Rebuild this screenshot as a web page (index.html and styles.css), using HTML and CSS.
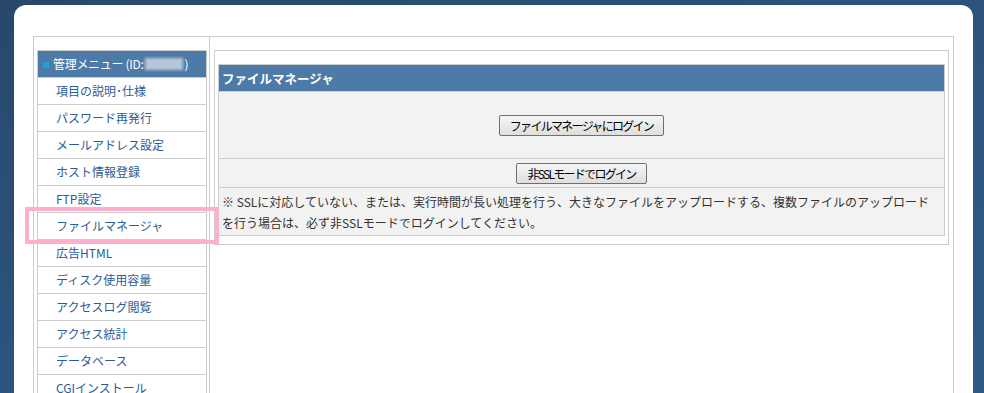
FILE: index.html
```html
<!DOCTYPE html>
<html lang="ja">
<head>
    <meta charset="UTF-8">
    <title>ファイルマネージャ</title>
    <link rel="stylesheet" href="styles.css">
</head>
<body>
    <div class="page">
        <div class="frame">
            <div class="sideCol">
                <ul class="menu">
                    <li class="menuHead"><span class="mark"></span>管理メニュー (ID:<span class="idMask"></span>)</li>
                    <li><a href="#">項目の説明･仕様</a></li>
                    <li><a href="#">パスワード再発行</a></li>
                    <li><a href="#">メールアドレス設定</a></li>
                    <li><a href="#">ホスト情報登録</a></li>
                    <li><a href="#">FTP設定</a></li>
                    <li class="current"><a href="#">ファイルマネージャ</a><span class="highlight"></span></li>
                    <li><a href="#">広告HTML</a></li>
                    <li><a href="#">ディスク使用容量</a></li>
                    <li><a href="#">アクセスログ閲覧</a></li>
                    <li><a href="#">アクセス統計</a></li>
                    <li><a href="#">データベース</a></li>
                    <li><a href="#">CGIインストール</a></li>
                </ul>
            </div>
            <div class="mainCol">
                <div class="box">
                    <table class="fmTable">
                        <tr><th>ファイルマネージャ</th></tr>
                        <tr><td class="loginCell"><button type="button">ファイルマネージャにログイン</button></td></tr>
                        <tr><td class="plainCell"><button type="button">非SSLモードでログイン</button></td></tr>
                        <tr><td class="note">※ SSLに対応していない、または、実行時間が長い処理を行う、大きなファイルをアップロードする、複数ファイルのアップロードを行う場合は、必ず非SSLモードでログインしてください。</td></tr>
                    </table>
                </div>
            </div>
        </div>
    </div>
</body>
</html>
```

FILE: styles.css
```css
body {
    margin: 0;
    height: 393px;
    overflow: hidden;
    background: linear-gradient(160deg, #27486b 0%, #2e5580 55%, #2f5a86 100%);
    font-family: "Noto Sans CJK JP", "Noto Sans", sans-serif;
    font-size: 12px;
    color: #333;
}

.page {
    margin: 5px 0 0 14px;
    width: 921px;
    height: 400px;
    padding: 31px 19px 0 19px;
    background-color: #ffffff;
    border-radius: 12px 12px 0 0;
}

.frame {
    display: flex;
    height: 400px;
    border: 1px solid #cccccc;
}

.sideCol {
    width: 176px;
    padding: 13px 0 0 3px;
    box-sizing: border-box;
    border-right: 1px solid #cccccc;
}

.menu {
    list-style: none;
    margin: 0;
    padding: 0;
    width: 170px;
    border: 1px solid #cccccc;
    box-sizing: border-box;
}

.menu li {
    position: relative;
    height: 26px;
    line-height: 26px;
    border-top: 1px solid #cccccc;
    padding-left: 18px;
}

.menu a {
    color: #2b5c98;
    text-decoration: none;
}

.menu .menuHead {
    border-top: none;
    background-color: #4e7aa8;
    color: #ffffff;
    padding-left: 5px;
    letter-spacing: -0.3px;
}

.mark {
    display: inline-block;
    width: 6px;
    height: 6px;
    margin-right: 4px;
    background-color: #1ea0dc;
    vertical-align: 1px;
}

.idMask {
    display: inline-block;
    width: 38px;
    height: 12px;
    margin: 0 2px 0 1px;
    background-color: #b7c6d8;
    filter: blur(1.5px);
    vertical-align: -1px;
}

.highlight {
    position: absolute;
    left: -13px;
    top: -6px;
    width: 186px;
    height: 29px;
    border: 4px solid #fcb0cb;
}

.mainCol {
    flex: 1;
    padding: 13px 4px 0 4px;
}

.box {
    border: 1px solid #cccccc;
    padding: 13px 3px 8px 3px;
}

.fmTable {
    width: 100%;
    border-collapse: collapse;
    border: 1px solid #cccccc;
    background-color: #f2f2f2;
}

.fmTable th {
    height: 26px;
    padding: 0 0 0 3px;
    background-color: #4e7aa8;
    color: #ffffff;
    text-align: left;
    font-size: 12.5px;
}

.fmTable td {
    border-top: 1px solid #cccccc;
    text-align: center;
    padding: 0;
}

.loginCell {
    height: 66px;
}

.plainCell {
    height: 28px;
}

.fmTable .note {
    text-align: left;
    padding: 3px 14px 2px 3px;
    line-height: 21px;
    color: #333333;
}

button {
    height: 21px;
    padding: 0 10px;
    font-family: inherit;
    font-size: 12px;
    letter-spacing: -1.7px;
    color: #000000;
    background: linear-gradient(#f6f6f6, #dedede);
    border: 1px solid #707070;
    border-radius: 2px;
}
```
